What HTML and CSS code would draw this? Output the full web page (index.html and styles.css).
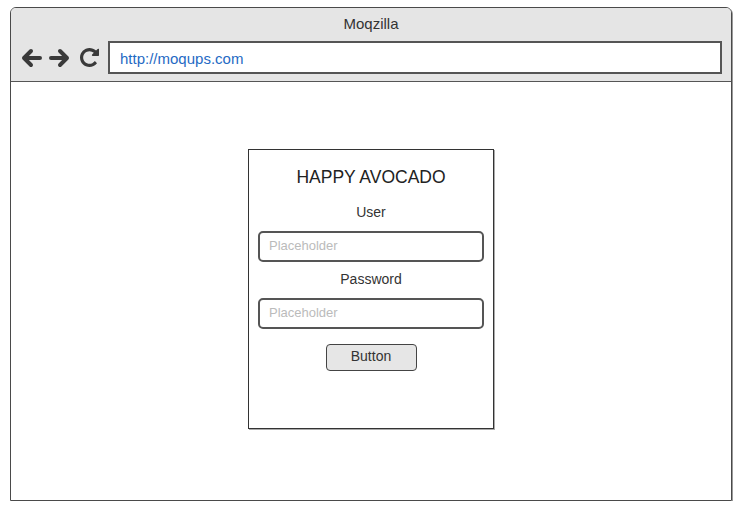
FILE: index.html
```html
<!DOCTYPE html>
<html>
<head>
<meta charset="utf-8">
<link rel="stylesheet" href="styles.css">
</head>
<body>
<div class="browser">
  <div class="header">
    <div class="title">Moqzilla</div>
    <div class="toolbar">
      <div class="nav">
        <svg class="icon" width="22" height="20" viewBox="0 0 22 20"><path d="M20 10 H4 M11 3 L4 10 L11 17" fill="none" stroke="#3a3a3a" stroke-width="4" stroke-linecap="round" stroke-linejoin="round"/></svg>
        <svg class="icon" width="22" height="20" viewBox="0 0 22 20"><path d="M2 10 H18 M11 3 L18 10 L11 17" fill="none" stroke="#3a3a3a" stroke-width="4" stroke-linecap="round" stroke-linejoin="round"/></svg>
        <svg class="icon reload" width="19" height="19" viewBox="0 0 1536 1536"><path fill="#3a3a3a" d="M1536 128v448q0 26-19 45t-45 19h-448q-42 0-59-40-17-39 14-69l138-138q-148-137-349-137-104 0-198.5 40.5t-163.5 109.5-109.5 163.5-40.5 198.5 40.5 198.5 109.5 163.5 163.5 109.5 198.5 40.5q119 0 225-52t179-147q7-10 23-12 15 0 25 9l137 138q9 8 9.5 20.5t-7.5 22.5q-109 132-264 204.5t-327 72.5q-156 0-298-61t-245-164-164-245-61-298 61-298 164-245 245-164 298-61q147 0 284.5 55.5t244.5 156.5l130-129q29-31 70-14 39 17 39 59z"/></svg>
      </div>
      <div class="url">http://moqups.com</div>
    </div>
  </div>
  <div class="content">
    <div class="card">
      <div class="card-title">HAPPY AVOCADO</div>
      <div class="label first">User</div>
      <div class="input">Placeholder</div>
      <div class="label">Password</div>
      <div class="input">Placeholder</div>
      <div class="button">Button</div>
    </div>
  </div>
</div>
</body>
</html>
```

FILE: styles.css
```css
html, body {
  margin: 0;
  padding: 0;
  background: #fff;
  font-family: "Liberation Sans", Arial, sans-serif;
  color: #333;
}

.browser {
  margin: 7px 0 0 10px;
  width: 720px;
  height: 492px;
  border: 1px solid #4a4a4a;
  border-radius: 6px 6px 0 0;
  box-shadow: 1px 1px 0 #9a9a9a;
  display: flex;
  flex-direction: column;
  overflow: hidden;
}

.header {
  background: #e5e5e5;
  border-bottom: 1px solid #555;
  padding: 7px 9px 7px 9px;
  height: 59px;
}

.title {
  text-align: center;
  font-size: 15px;
  line-height: 18px;
  height: 18px;
  color: #333;
}

.toolbar {
  margin-top: 8px;
  display: flex;
  align-items: center;
}

.nav {
  display: flex;
  align-items: center;
  width: 88px;
  gap: 7px;
}

.icon {
  display: block;
}

.reload {
  margin-left: 2px;
}

.url {
  flex: 1;
  height: 29px;
  border: 2px solid #555;
  background: #fff;
  color: #1f6ac4;
  font-size: 15px;
  line-height: 31px;
  padding-left: 10px;
}

.content {
  flex: 1;
  display: flex;
  justify-content: center;
  align-items: flex-start;
  padding-top: 67px;
}

.card {
  width: 226px;
  height: 278px;
  border: 1px solid #333;
  box-shadow: 1px 1px 0 #aaa;
  padding: 0 9px;
  display: flex;
  flex-direction: column;
  align-items: center;
}

.card-title {
  margin-top: 17px;
  font-size: 17.5px;
  line-height: 21px;
  color: #222;
}

.label {
  font-size: 14px;
  line-height: 17px;
  margin-top: 9px;
  color: #333;
}

.label.first {
  margin-top: 16px;
}

.input {
  align-self: stretch;
  margin-top: 10px;
  height: 27px;
  border: 2px solid #555;
  border-radius: 5px;
  color: #bbb;
  font-size: 13px;
  line-height: 25px;
  padding-left: 9px;
  box-sizing: content-box;
}

.button {
  margin-top: 15px;
  width: 89px;
  height: 25px;
  border: 1.5px solid #444;
  border-radius: 4px;
  background: #e6e6e6;
  text-align: center;
  font-size: 14px;
  line-height: 23px;
  color: #333;
}
```
